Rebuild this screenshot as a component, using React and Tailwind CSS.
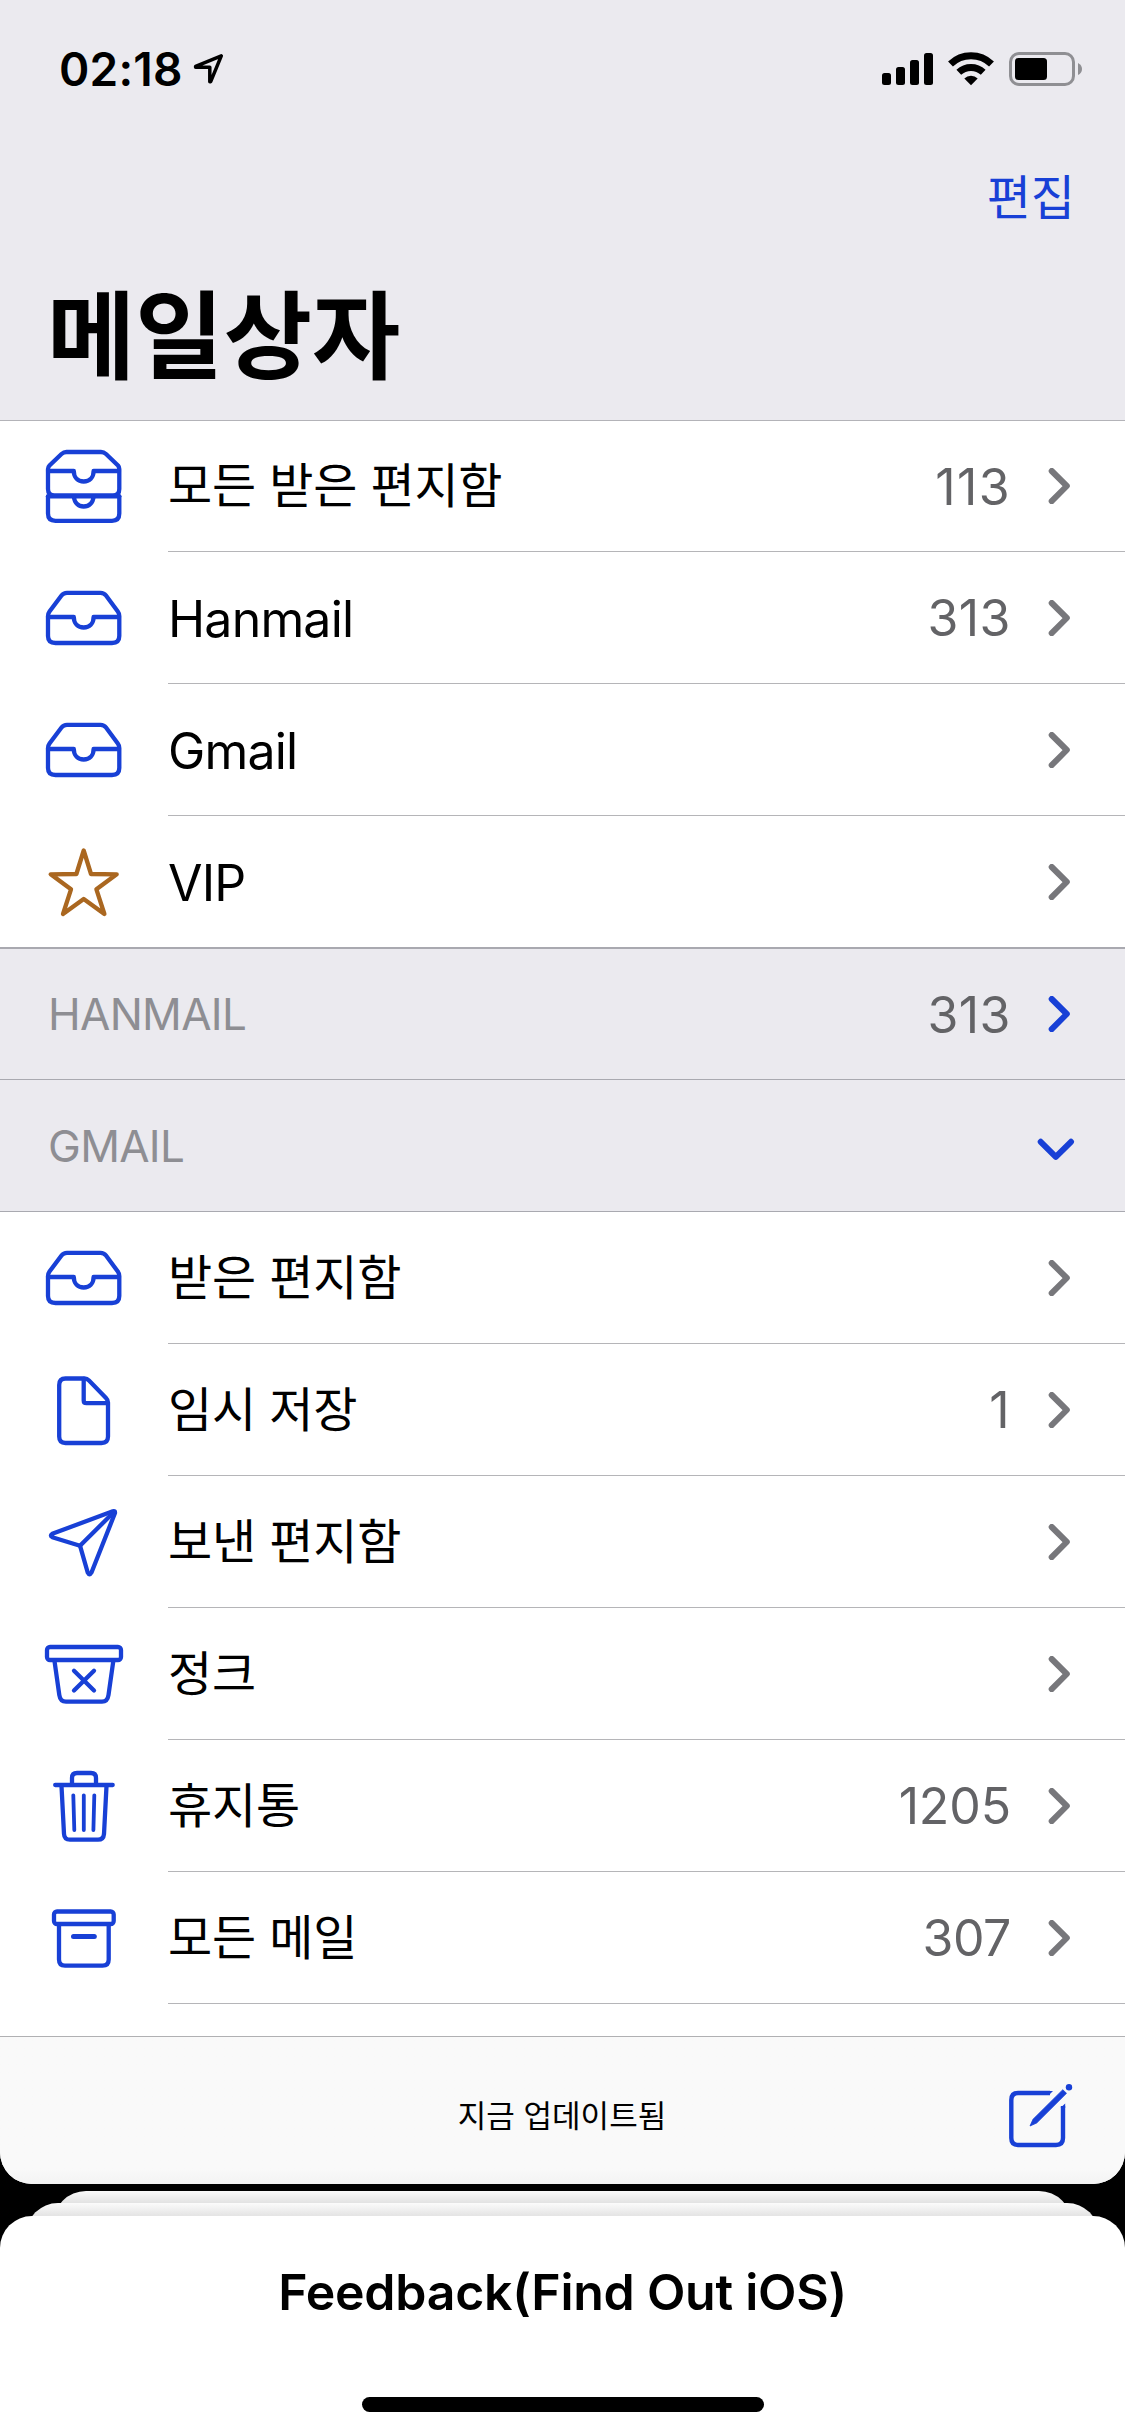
import React from "react";

const BLUE = "#1840d6";

function IconFrame({ children, color = BLUE }) {
  return (
    <svg
      className="w-[168px] h-[130px] shrink-0"
      viewBox="0 0 168 130"
      fill="none"
      stroke={color}
      strokeWidth="4.300"
      strokeLinecap="round"
      strokeLinejoin="round"
    >
      {children}
    </svg>
  );
}

function TrayStack() {
  return (
    <IconFrame>
      <path d="M48 48 Q48 46 49.5 44.5 L61.5 33 Q63.7 31 66.5 31 H101 Q103.8 31 106 33 L118 44.5 Q119.300 46 119.300 48 V68 Q119.300 74.500 113 74.500 H54.500 Q48 74.500 48 68 Z" />
      <path d="M48 50 H73.800 C73.800 56.500 78 60.500 83.700 60.500 C89.400 60.500 93.600 56.500 93.600 50 H119" />
      <path d="M48 75.500 V92.500 Q48 99.800 55.500 99.800 H112 Q119.300 99.800 119.300 92.500 V75.500" />
      <path d="M48 75.300 H119.300" />
      <path d="M73.800 75.500 C74.500 82 78.500 85.500 83.700 85.500 C89 85.500 93 82 93.600 75.500" />
    </IconFrame>
  );
}

function Tray() {
  return (
    <IconFrame>
      <path d="M48 64 Q48 61.500 49.500 59.500 L61.500 43.500 Q63.500 40.800 67 40.800 H100.500 Q104 40.800 106 43.500 L117.800 59.500 Q119.300 61.500 119.300 64 V84 Q119.300 91 112 91 H55.500 Q48 91 48 84 Z" />
      <path d="M48 65 H73.800 C73.800 71.500 78 75.500 83.700 75.500 C89.400 75.500 93.600 71.500 93.600 65 H119" />
    </IconFrame>
  );
}

function Star() {
  return (
    <IconFrame color="#aa6720">
      <path d="M83.700 34.500 L91 58 L116.700 58.300 L96.400 73.300 L104.400 98 L83.700 83 L63 98 L71 73.300 L50.700 58.300 L76.400 58 Z" />
    </IconFrame>
  );
}

function Doc() {
  return (
    <IconFrame>
      <path d="M65.500 34.500 H84.500 Q87 34.500 89 36.500 L106 54 Q108 56 108 58.500 V92.500 Q108 99 101.500 99 H65.500 Q59.200 99 59.200 92.500 V41 Q59.200 34.500 65.500 34.500 Z" />
      <path d="M83.700 35 V56.500 Q83.700 59.200 86.500 59.200 H107.500" />
    </IconFrame>
  );
}

function Plane() {
  return (
    <IconFrame>
      <path d="M112.800 35.300 L52.300 57.800 Q49.500 59.700 52.300 61.200 L80 69.700 L87.700 96.500 Q89.500 100 91.500 96.500 L114.900 37.300 Q115.500 34.500 112.800 35.300 Z" />
      <path d="M80 69.700 L113.500 36.500" />
    </IconFrame>
  );
}

function Junk() {
  return (
    <IconFrame>
      <rect x="47" y="39" width="74" height="13" rx="3" />
      <path d="M54.500 53 L59.300 87 Q60.300 93.700 66 93.700 H102 Q107.500 93.700 108.500 87 L113.300 53" />
      <path d="M74 62.700 L94 82.500 M94 62.700 L74 82.500" />
    </IconFrame>
  );
}

function Trash() {
  return (
    <IconFrame>
      <path d="M55.200 45 H112.700 M72 44 V38 Q72 33 77 33 H91 Q96 33 96 38 V44" />
      <path d="M61.500 46 L64 94 Q64.300 99.700 70 99.700 H98 Q103.500 99.700 104 94 L106.500 46" />
      <path strokeWidth="3.800" d="M73.300 55.300 L74.300 90 M83.800 55.300 V90 M94.300 55.300 L93.400 90" />
    </IconFrame>
  );
}

function Archive() {
  return (
    <IconFrame>
      <rect x="54" y="39.500" width="59.700" height="12.500" rx="3" />
      <path d="M59 53 V87.500 Q59 93.700 65 93.700 H102.500 Q108.700 93.700 108.700 87.500 V53" />
      <path strokeWidth="5" d="M73.500 64.500 H94.300" />
    </IconFrame>
  );
}

function Chevron({ color = "#77777b" }) {
  return (
    <svg className="w-6 h-9 shrink-0" viewBox="0 0 24 36" fill="none" stroke={color} strokeWidth="6" strokeLinecap="round" strokeLinejoin="round">
      <path d="M3.700 3 L18.800 18 L3.700 33.200" />
    </svg>
  );
}

function Count({ value, tracking = "tracking-[-0.4px]" }) {
  return (
    <span className={`relative top-px mr-[37px] text-[50px] text-[#636366] ${tracking}`}>{value}</span>
  );
}

function Row({ icon, label, count, tracking, first }) {
  return (
    <div className={first ? "flex h-[131px] bg-white" : "flex h-[132px] bg-white"}>
      {icon}
      <div className="flex flex-1 items-center border-b border-[#b5b5b8] pr-[53px]">
        <span className="flex-1 whitespace-nowrap">{label}</span>
        {count && <Count value={count} tracking={tracking} />}
        <Chevron />
      </div>
    </div>
  );
}

function Korean({ children }) {
  return <span className="relative text-[48px] tracking-[-0.2px]">{children}</span>;
}

function Latin({ children }) {
  return <span className="relative top-[2px] text-[50px] tracking-[-0.8px]">{children}</span>;
}

export default function App() {
  return (
    <div className="flex h-[2436px] w-[1125px] flex-col overflow-hidden bg-black font-['Inter','Noto_Sans_CJK_KR',sans-serif] text-black">
      <div className="flex h-[2184px] shrink-0 flex-col overflow-hidden rounded-b-[32px] bg-white">
        <header className="flex h-[421px] shrink-0 flex-col border-b border-[#b3b3b8] bg-[#ebeaef]">
          <div className="flex h-[138px] items-center justify-between pl-[59px] pr-[42px]">
            <div className="flex items-center gap-[10px]">
              <span className="text-[46px] font-semibold leading-none tracking-[0.2px]">02:18</span>
              <svg className="h-9 w-8" viewBox="191 51 32 36" fill="none" stroke="#000" strokeWidth="3.500" strokeLinecap="round" strokeLinejoin="round">
                <path d="M219.300 55.800 L193.600 66.400 V67.300 H207.800 V81.700 H208.700 Z" />
              </svg>
            </div>
            <svg className="h-9 w-[202px]" viewBox="881 51 202 36">
              <rect x="882" y="73" width="9" height="12" rx="2.500" />
              <rect x="896" y="67" width="9" height="18" rx="2.500" />
              <rect x="910" y="60" width="9" height="25" rx="2.500" />
              <rect x="924" y="53" width="9" height="32" rx="2.500" />
              <g fill="none" stroke="#000" strokeWidth="7">
                <path d="M950.500 64 A29.500 29.500 0 0 1 991.500 64" />
                <path d="M958.800 72.300 A18 18 0 0 1 983.200 72.300" />
              </g>
              <path d="M964.300 78.500 A9.800 9.800 0 0 1 977.700 78.500 L971 85.200 Z" />
              <rect x="1010.500" y="53.500" width="63" height="31" rx="8.500" fill="none" stroke="#8f8f93" strokeWidth="3" />
              <rect x="1015" y="58" width="32" height="22" rx="3.500" />
              <path d="M1078 63 Q1082 65 1082 69 Q1082 73 1078 75 Z" fill="#8f8f93" />
            </svg>
          </div>
          <div className="flex h-[120px] items-center justify-end pr-[50px] text-[48px] text-[#1840d6]">편집</div>
          <h1 className="pl-[47px] text-[96px] font-bold leading-[157px]">메일상자</h1>
        </header>

        <Row first icon={<TrayStack />} label={<Korean>모든 받은 편지함</Korean>} count="113" tracking="tracking-[1.4px]" />
        <Row icon={<Tray />} label={<Latin>Hanmail</Latin>} count="313" tracking="tracking-[0.5px]" />
        <Row icon={<Tray />} label={<Latin>Gmail</Latin>} />
        <div className="flex h-[131px] shrink-0 bg-white">
          <Star />
          <div className="flex flex-1 items-center pr-[53px]">
            <span className="flex-1"><Latin>VIP</Latin></span>
            <Chevron />
          </div>
        </div>

        <div className="flex h-[133px] shrink-0 items-center border-t-2 border-b border-[#a9a9b0] bg-[#ebeaef] pl-[48px] pr-[53px]">
          <span className="flex-1 text-[44px] tracking-[-0.7px] text-[#8e8e93]">HANMAIL</span>
          <Count value="313" tracking="tracking-[0.5px]" />
          <Chevron color={BLUE} />
        </div>
        <div className="flex h-[132px] shrink-0 items-center border-b border-[#a9a9b0] bg-[#ebeaef] pl-[48px] pr-[50px]">
          <span className="flex-1 text-[44px] tracking-[-0.7px] text-[#8e8e93]">GMAIL</span>
          <svg className="mt-[8px] h-6 w-[38px]" viewBox="0 0 38 24" fill="none" stroke={BLUE} strokeWidth="6" strokeLinecap="round" strokeLinejoin="round">
            <path d="M3.700 3.800 L18.800 18.900 L34 3.800" />
          </svg>
        </div>

        <Row icon={<Tray />} label={<Korean>받은 편지함</Korean>} />
        <Row icon={<Doc />} label={<Korean>임시 저장</Korean>} count="1" tracking="tracking-[1.400px]" />
        <Row icon={<Plane />} label={<Korean>보낸 편지함</Korean>} />
        <Row icon={<Junk />} label={<Korean>정크</Korean>} />
        <Row icon={<Trash />} label={<Korean>휴지통</Korean>} count="1205" tracking="tracking-[-0.1px]" />
        <Row icon={<Archive />} label={<Korean>모든 메일</Korean>} count="307" />

        <footer className="mt-auto flex h-[148px] shrink-0 items-center border-t border-[#b0b0b3] bg-linear-to-b from-[#f9f9f9] from-90% to-[#f3f3f3] pl-[117px] pr-[52px]">
          <span className="mt-[11px] flex-1 text-center text-[31px]">지금 업데이트됨</span>
          <svg className="mt-[9px] h-[66px] w-[66px]" viewBox="1007 2082 66 66" fill="none">
            <path d="M1050 2093 H1018 Q1011.300 2093 1011.300 2100 V2138 Q1011.300 2145 1018 2145 H1056 Q1063 2145 1063 2138 V2106" stroke={BLUE} strokeWidth="4.400" />
            <path d="M1049 2095 L1053 2091 H1049 Z M1060.800 2107.500 L1065.200 2103.500 V2108 H1060.800 Z" fill={BLUE} />
            <path d="M1030 2126 L1033 2119.300 L1062.800 2089.700 L1066.500 2093.300 L1036.700 2123 Z" fill={BLUE} stroke={BLUE} strokeWidth="0.800" />
            <circle cx="1069" cy="2087.300" r="3.200" fill={BLUE} />
          </svg>
        </footer>
      </div>

      <div className="mx-[53px] mt-[7px] h-[60px] shrink-0 rounded-t-[33px] bg-linear-to-b from-[#fafafa] to-[#e2e2e2] to-20%" />
      <div className="relative mx-[26px] mt-[-48px] h-[60px] shrink-0 rounded-t-[32px] bg-linear-to-b from-[#fbfbfb] to-[#e5e5e5] to-20%" />
      <div className="relative mt-[-47px] flex flex-1 flex-col items-center rounded-t-[32px] bg-white pt-[46px]">
        <div className="text-[50px] font-semibold leading-[60px] tracking-[-0.250px]">Feedback(Find Out iOS)</div>
        <div className="mt-auto mb-6 h-[15px] w-[402px] rounded-full bg-black" />
      </div>
    </div>
  );
}
